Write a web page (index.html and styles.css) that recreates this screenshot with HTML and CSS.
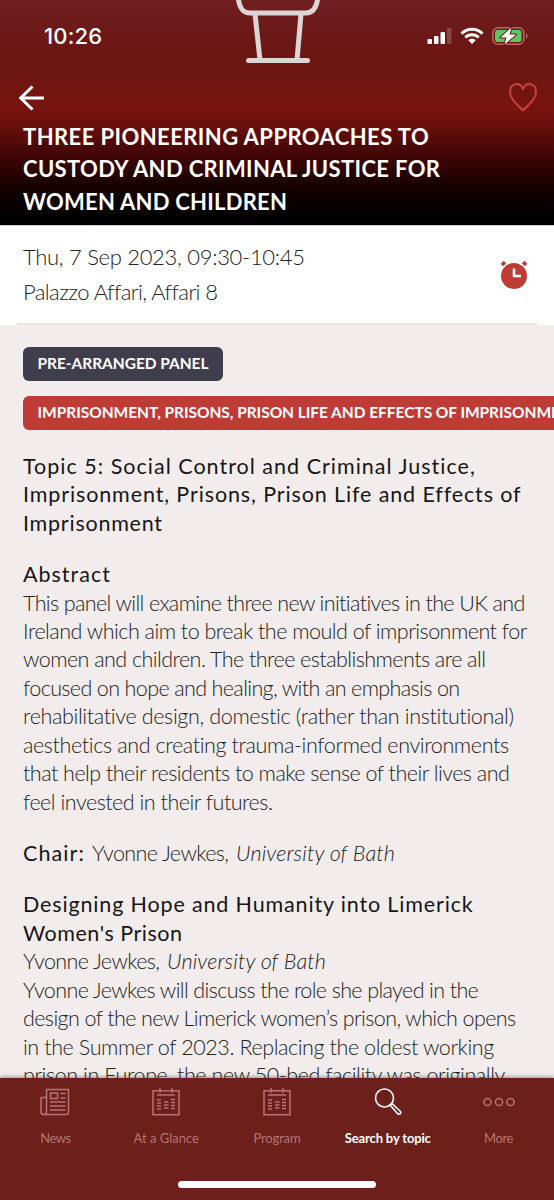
FILE: index.html
```
<!DOCTYPE html>
<html lang="en">
<head>
<meta charset="utf-8">
<meta name="viewport" content="width=device-width">
<title>Session details</title>
<link rel="stylesheet" href="styles.css">
</head>
<body>
<div class="screen">
  <header class="hero">
    <svg class="emblem" width="90" height="66" viewBox="0 0 90 66" fill="none" stroke="#dcd5d6" stroke-width="5" stroke-linecap="round" stroke-linejoin="round">
      <path d="M6 -4C7 7 10 13 18 13H74C81 13 85 7 86 -4M23 14L28 60M69 14L65 60M16.500 60.500H75.500"/>
    </svg>
    <div class="status">
      <span class="time">10:26</span>
      <div class="indicators">
        <svg class="signal" width="26" height="18" viewBox="0 0 26 18" fill="#fff">
          <rect x=".5" y="12" width="4.500" height="5" rx="1"/><rect x="7" y="9" width="4.500" height="8" rx="1"/><rect x="13.500" y="5" width="4.500" height="12" rx="1"/><rect x="20" y="1" width="4.500" height="16" rx="1" opacity=".2"/>
        </svg>
        <svg class="wifi" width="24" height="18" viewBox="0 0 24 18" fill="none" stroke="#fff" stroke-width="3">
          <path d="M1.500 6.600C7.300 .8 16.700 .8 22.500 6.600M5.300 10.500C9 6.900 15 6.900 18.700 10.500"/>
          <path d="M8.300 13.300C10.300 11.300 13.700 11.300 15.700 13.300L12 17Z" fill="#fff" stroke="none"/>
        </svg>
        <svg class="battery" width="36" height="20" viewBox="0 0 36 20">
          <rect x=".8" y="1.700" width="31" height="16.600" rx="5" fill="none" stroke="#b36a66" stroke-width="1.500"/>
          <rect x="3" y="4" width="26.500" height="12" rx="2.800" fill="#5bc763"/>
          <path d="M34 7.300C36 8 36 12 34 12.700Z" fill="#b36a66"/>
          <path d="M19.500 1.500L8.500 11.500H14.500L12.500 18.500L24 8.500H17.500Z" fill="#fff" stroke="#6e1717" stroke-width="2" paint-order="stroke" stroke-linejoin="round"/>
        </svg>
      </div>
    </div>
    <div class="actions">
      <svg width="26" height="26" viewBox="0 0 26 26" fill="none" stroke="#fff" stroke-width="3"><path d="M26 13H3M14.500 1.500L2.700 13L14.500 24.500"/></svg>
      <svg width="30" height="30" viewBox="0 0 30 30" fill="none" stroke="#c3403b" stroke-width="2.200" stroke-linejoin="round"><path d="M15 28.300C9 22.500 2 17 2 9.500C2 1.500 12 -1 15 7C18 -1 28 1.500 28 9.500C28 17 21 22.500 15 28.300Z"/></svg>
    </div>
    <h1 class="title">
      <span class="line t1">THREE PIONEERING APPROACHES TO</span>
      <span class="line t2">CUSTODY AND CRIMINAL JUSTICE FOR</span>
      <span class="line t3">WOMEN AND CHILDREN</span>
    </h1>
  </header>

  <section class="meta">
    <div class="when">
      <span class="line m1">Thu, 7 Sep 2023, 09:30-10:45</span>
      <span class="line m2">Palazzo Affari, Affari 8</span>
    </div>
    <svg class="alarm" width="28" height="30" viewBox="0 0 28 30">
      <circle cx="14" cy="16" r="13" fill="#bf3c36"/>
      <path d="M1.800 5L5 2.200M26.200 5L23 2.200" stroke="#bf3c36" stroke-width="3.600"/>
      <path d="M14 8.500V16H21" fill="none" stroke="#fff" stroke-width="2.600"/>
    </svg>
  </section>

  <main class="content">
    <div class="tags">
      <span class="tag"><span class="g1">PRE-ARRANGED PANEL</span></span>
      <span class="tag topic"><span class="g2">IMPRISONMENT, PRISONS, PRISON LIFE AND EFFECTS OF IMPRISONMENT</span></span>
    </div>
    <section class="block">
      <h2>
        <span class="line h1">Topic 5: Social Control and Criminal Justice,</span>
        <span class="line h2">Imprisonment, Prisons, Prison Life and Effects of</span>
        <span class="line h3">Imprisonment</span>
      </h2>
    </section>
    <section class="block">
      <h2><span class="line h4">Abstract</span></h2>
      <p>
        <span class="line b1">This panel will examine three new initiatives in the UK and</span>
        <span class="line b2">Ireland which aim to break the mould of imprisonment for</span>
        <span class="line b3">women and children. The three establishments are all</span>
        <span class="line b4">focused on hope and healing, with an emphasis on</span>
        <span class="line b5">rehabilitative design, domestic (rather than institutional)</span>
        <span class="line b6">aesthetics and creating trauma-informed environments</span>
        <span class="line b7">that help their residents to make sense of their lives and</span>
        <span class="line b8">feel invested in their futures.</span>
      </p>
    </section>
    <section class="block">
      <p class="person chair"><strong>Chair:</strong><span class="name">Yvonne Jewkes,</span><em>University of Bath</em></p>
    </section>
    <section class="block">
      <h2>
        <span class="line h5">Designing Hope and Humanity into Limerick</span>
        <span class="line h6">Women's Prison</span>
      </h2>
      <p class="person"><span class="name">Yvonne Jewkes,</span><em>University of Bath</em></p>
      <p>
        <span class="line c1">Yvonne Jewkes will discuss the role she played in the</span>
        <span class="line c2">design of the new Limerick women’s prison, which opens</span>
        <span class="line c3">in the Summer of 2023. Replacing the oldest working</span>
        <span class="line c4">prison in Europe, the new 50-bed facility was originally</span>
      </p>
    </section>
  </main>

  <nav class="tabs">
    <div class="tab-row">
      <div class="tab">
        <svg width="30" height="28" viewBox="0 0 30 28" fill="none" stroke="currentColor" stroke-width="1.500" stroke-linejoin="round"><path d="M6.500 1.500H28.500V24.500C28.500 25.500 28 26.500 26.500 26.500H3.500C2 26.500 1 25.500 1 24V9.500H6.500M6.500 1.500V24C6.500 25.500 5.500 26.500 3.800 26.500M10.500 5H17.500V10.500H10.500ZM20.500 5.500H25.500M20.500 10H25.500M10 14H25.500M10 18H25.500M10 22H25.500"/></svg>
        <span class="n1">News</span>
      </div>
      <div class="tab">
        <svg width="30" height="28" viewBox="0 0 30 28" fill="none" stroke="currentColor" stroke-width="1.500"><path d="M2 2.800H28V26.800H2ZM9 0V5M21 0V5M6 7H24M6 12H10M6 15H10M6 18H10M6 21H10M13 14H17.500M13 17H17.500M13 20H17.500M20 11.500H24M20 14.500H24M20 17.500H24M20 20.500H24"/></svg>
        <span class="n2">At a Glance</span>
      </div>
      <div class="tab">
        <svg width="30" height="28" viewBox="0 0 30 28" fill="none" stroke="currentColor" stroke-width="1.500"><path d="M2 2.800H28V26.800H2ZM9 0V5M21 0V5M6 7H24M6 12H10M6 15H10M6 18H10M6 21H10M13 14H17.500M13 17H17.500M13 20H17.500M20 11.500H24M20 14.500H24M20 17.500H24M20 20.500H24"/></svg>
        <span class="n3">Program</span>
      </div>
      <div class="tab active">
        <svg width="30" height="28" viewBox="0 0 30 28" fill="none" stroke="currentColor" stroke-width="1.600" stroke-linejoin="round"><circle cx="11.500" cy="10" r="9"/><path d="M17 17L24 25C25 26.500 26.500 26.500 27 26C28 25 28 24 27 23L19 15.500Z"/></svg>
        <span class="n4">Search by topic</span>
      </div>
      <div class="tab">
        <svg width="34" height="28" viewBox="0 0 34 28" fill="none" stroke="currentColor" stroke-width="1.500"><circle cx="5.500" cy="14" r="3.600"/><circle cx="17" cy="14" r="3.600"/><circle cx="28.500" cy="14" r="3.600"/></svg>
        <span class="n5">More</span>
      </div>
    </div>
    <div class="home-bar"></div>
  </nav>
</div>
</body>
</html>
```
FILE: styles.css
```
* { box-sizing: border-box; }
body { margin: 0; font-family: Lato, "Open Sans", sans-serif; font-variant-ligatures: none; background: #f2edec; }
h1, h2, p { margin: 0; }
.line { display: block; white-space: nowrap; }

.screen { width: 554px; height: 1200px; display: flex; flex-direction: column; overflow: hidden; }

.hero {
  position: relative;
  flex: none;
  height: 225px;
  background: linear-gradient(#6f1e20 0, #6c1715 45px, #6d1511 75px, #781410 110px, #690f0c 125px, #3a0504 160px, #150101 188px, #000 218px);
}
.emblem { position: absolute; left: 232px; top: 0; }
.status { height: 70px; padding: 1px 26px 0 44px; display: flex; align-items: center; justify-content: space-between; }
.time { font: 500 22px/1 Inter, sans-serif; color: #fff; letter-spacing: .15px; }
.indicators { display: flex; align-items: center; }
.wifi { margin: 0 8px 0 7px; }
.actions { height: 51px; padding: 12px 16px 0 18px; display: flex; justify-content: space-between; align-items: flex-start; }
.actions svg:first-child { margin-top: 3px; }
.title { padding-left: 23px; font-size: 22px; line-height: 32.300px; font-weight: 700; color: #fff; }
.t1 { letter-spacing: .43px; }
.t2 { letter-spacing: .35px; }
.t3 { letter-spacing: .24px; }

.meta { position: relative; flex: none; height: 99.500px; padding: 13px 26px 0 23px; display: flex; justify-content: space-between; background: #fff; border-top: 1px solid #d0cccc; }
.meta::after { content: ""; position: absolute; left: 17px; right: 17px; bottom: 0; height: 2px; background: #e7e4e5; }
.when { font-size: 22px; line-height: 35.300px; font-weight: 300; color: #222; }
.m1 { letter-spacing: -.3px; }
.m2 { letter-spacing: -.58px; }
.alarm { margin-top: 21px; }

.content { flex: 1; min-height: 0; overflow: hidden; padding: 22.500px 0 0 23px; background: #f2edec; font-size: 21.500px; line-height: 28.450px; font-weight: 300; color: #222; }
.tags { display: flex; flex-direction: column; align-items: flex-start; gap: 14.500px; margin-bottom: 22.300px; }
.tag { height: 34px; padding: 0 14.500px; border-radius: 6px; background: #403e4d; color: #fff; font-size: 15.500px; line-height: 33px; font-weight: 700; white-space: nowrap; }
.topic { background: #bf3c36; }
.g1 { letter-spacing: -.05px; }
.g2 { letter-spacing: -.04px; }
.block { margin-bottom: 22.900px; }
.block h2, .chair strong { font-size: 21.500px; font-weight: 400; color: #171515; }
.h1 { letter-spacing: 1.010px; }
.h2 { letter-spacing: .88px; }
.h3 { letter-spacing: .76px; }
.h4 { letter-spacing: 1px; }
.h5 { letter-spacing: .85px; }
.h6 { letter-spacing: .52px; }
.b1 { letter-spacing: -.62px; }
.b2 { letter-spacing: -.51px; }
.b3 { letter-spacing: -.55px; }
.b4 { letter-spacing: -.63px; }
.b5 { letter-spacing: -.35px; }
.b6 { letter-spacing: -.38px; }
.b7 { letter-spacing: -.52px; }
.b8 { letter-spacing: -.49px; }
.c1 { letter-spacing: -.62px; }
.c2 { letter-spacing: -.6px; }
.c3 { letter-spacing: -.41px; }
.c4 { letter-spacing: -.43px; }
.person { display: flex; white-space: nowrap; }
.chair strong { width: 69px; letter-spacing: 1.100px; }
.person .name { width: 144px; letter-spacing: -.6px; }
.person em { letter-spacing: .15px; }

.tabs { position: relative; flex: none; height: 122.500px; display: flex; flex-direction: column; align-items: center; background: #6d1f1b; box-shadow: 0 -1px 4px rgba(60, 20, 20, .45); }
.tab-row { width: 100%; display: grid; grid-template-columns: repeat(5, 1fr); padding-top: 10.500px; }
.tab { display: flex; flex-direction: column; align-items: center; gap: 13px; color: #b47672; font-size: 13px; line-height: 18px; }
.active { color: #fff; font-weight: 700; }
.n1 { letter-spacing: -.5px; }
.n3 { letter-spacing: -.17px; }
.n4 { letter-spacing: -.15px; }
.n5 { letter-spacing: -.4px; }
.home-bar { width: 198px; height: 7px; margin-top: 34px; border-radius: 4px; background: #fff; }
```
